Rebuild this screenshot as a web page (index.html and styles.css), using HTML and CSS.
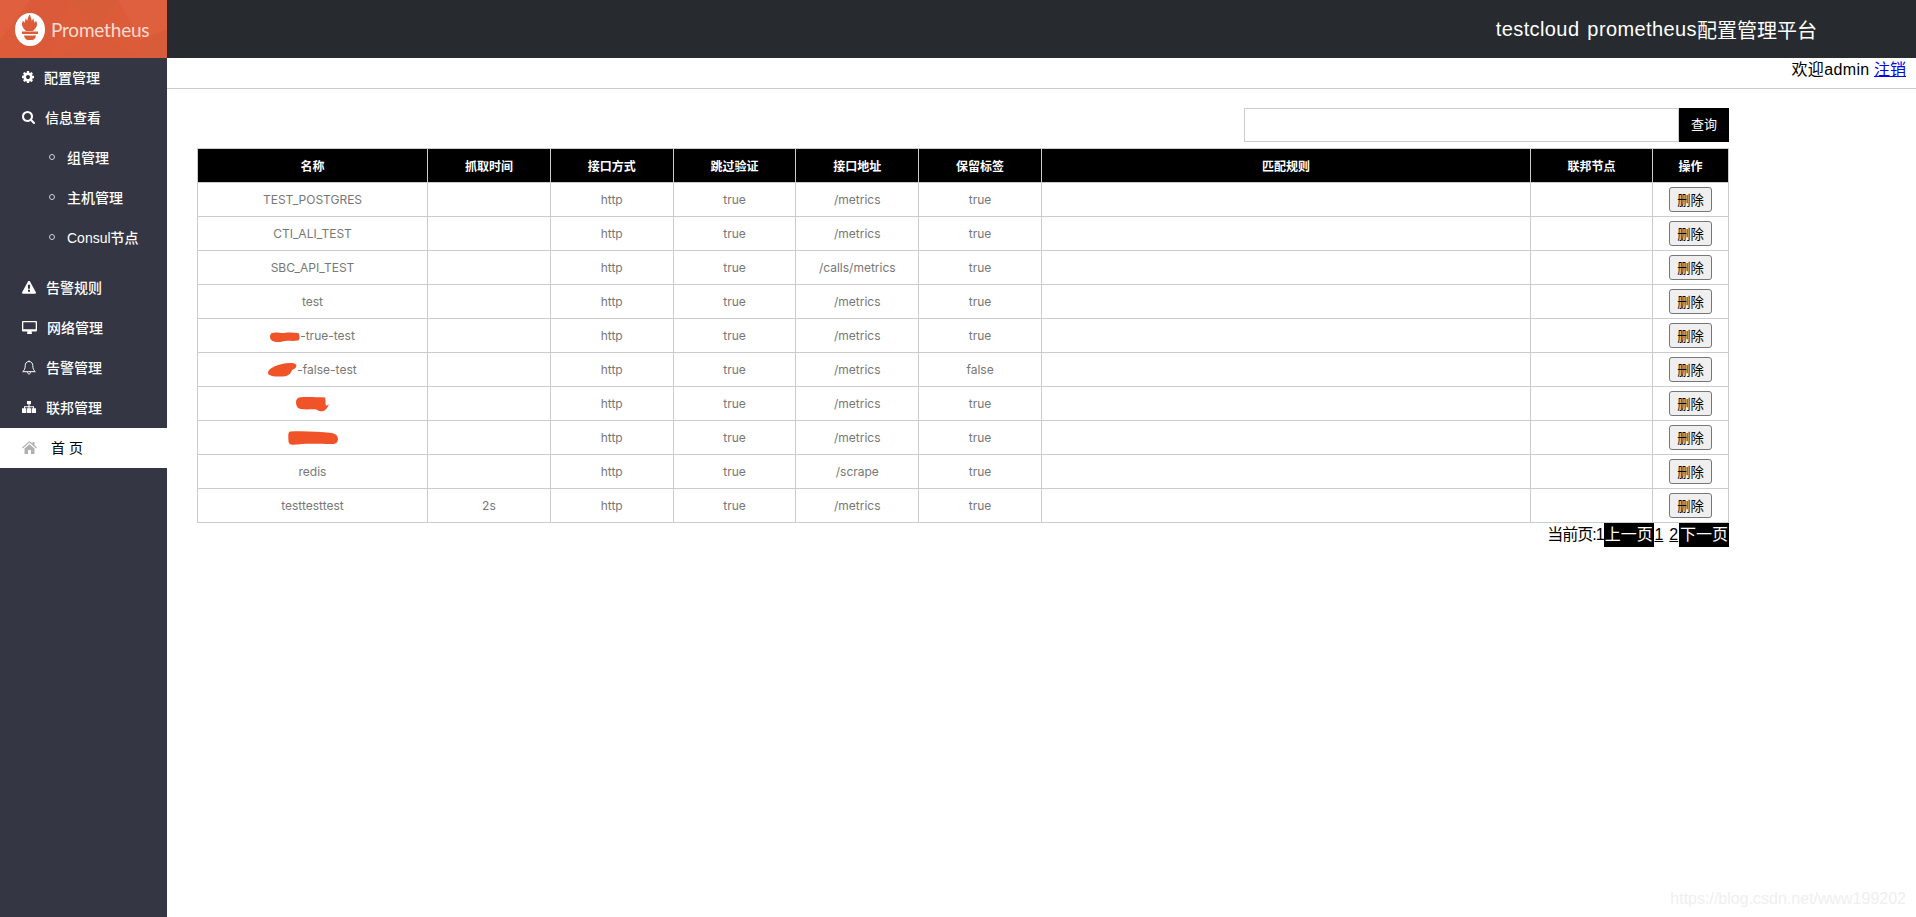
FILE: index.html
```html
<!DOCTYPE html>
<html lang="en">
<head>
    <meta charset="UTF-8">
    <meta name="viewport" content="width=device-width, initial-scale=1.0">
    <title>testcloud prometheus配置管理平台</title>
    <link rel="stylesheet" href="styles.css">
</head>
<body>
    <div class="sidebar">
        <div class="logo">
            <svg class="logo-bg" viewBox="0 0 167 58" preserveAspectRatio="none">
                <polygon points="0,0 30,0 0,40" fill="#df5f3e"/>
                <polygon points="30,0 70,0 50,58 20,58" fill="#da5a3a"/>
                <polygon points="70,0 118,0 95,30" fill="#d75c38"/>
                <polygon points="95,30 140,58 60,58" fill="#da5b39"/>
                <polygon points="118,0 167,0 167,30 140,40" fill="#df603e"/>
                <polygon points="140,40 167,30 167,58 140,58" fill="#d85c39"/>
            </svg>
            <svg class="logo-mark" viewBox="0 0 30 33" preserveAspectRatio="none">
                <ellipse cx="15" cy="16.500" rx="15" ry="16.500" fill="#fff"/>
                <path d="M15 2c.5 2 1.500 3.500 1.800 6l1.500-3c.3 2 1 3.500 1.200 5l1.500-2.500c1 2.500 1.500 4 .5 6-.6 1.500-2 3-3.500 4.500H11c-1.500-1.500-2.900-3-3.500-4.500-1-2-.5-3.500.5-6l1.500 2.500c.2-1.500.9-3 1.200-5l1.500 3c.3-2.500 1.300-4 1.800-6z" fill="#dc5c3a"/>
                <rect x="7" y="18.500" width="16" height="2.500" fill="#dc5c3a"/>
                <path d="M9 22.500h12c-.5 2.500-1.500 4-3.500 4.500h-5C10.500 26.500 9.500 25 9 22.500z" fill="#dc5c3a"/>
            </svg>
            <span class="logo-text">Prometheus</span>
        </div>
        <ul class="menu">
            <li class="menu-item">
                <svg class="icon icon-gear" viewBox="0 0 1536 1536"><path transform="translate(-128 -128)" d="M1152 896q0-106-75-181t-181-75-181 75-75 181 75 181 181 75 181-75 75-181zm512-109v222q0 12-8 23t-20 13l-185 28q-19 54-39 91 35 50 107 138 10 12 10 25t-9 23q-27 37-99 108t-94 71q-12 0-26-9l-138-108q-44 23-91 38-16 136-29 186-7 28-36 28h-222q-14 0-24.500-8.500t-11.500-21.500l-28-184q-49-16-90-37l-141 107q-10 9-25 9-14 0-25-11-126-114-165-168-7-10-7-23 0-12 8-23 15-21 51-66.500t54-70.500q-27-50-41-99l-183-27q-13-2-21-12.500t-8-23.500v-222q0-12 8-23t19-13l186-28q14-46 39-92-40-57-107-138-10-12-10-24 0-10 9-23 26-36 98.500-107.500t94.500-71.500q13 0 26 10l138 107q44-23 91-38 16-136 29-186 7-28 36-28h222q14 0 24.500 8.500t11.500 21.500l28 184q49 16 90 37l142-107q9-9 24-9 13 0 25 10 129 119 165 170 7 8 7 22 0 12-8 23-15 21-51 66.500t-54 70.500q26 50 41 98l183 28q13 2 21 12.500t8 23.500z"/></svg>
                配置管理
            </li>
            <li class="menu-item">
                <svg class="icon icon-search" viewBox="0 0 1664 1664"><path transform="translate(0 -128)" d="M1152 832q0-185-131.500-316.500t-316.500-131.500-316.500 131.500-131.500 316.500 131.500 316.500 316.500 131.500 316.500-131.500 131.500-316.500zm512 832q0 52-38 90t-90 38q-54 0-90-38l-343-342q-179 124-399 124-143 0-273.500-55.500t-225-150-150-225-55.500-273.500 55.500-273.500 150-225 225-150 273.500-55.500 273.500 55.500 225 150 150 225 55.500 273.500q0 220-124 399l343 343q37 37 37 90z"/></svg>
                信息查看
            </li>
            <li class="menu-sub"><span class="dot"></span>组管理</li>
            <li class="menu-sub"><span class="dot"></span>主机管理</li>
            <li class="menu-sub menu-sub-last"><span class="dot"></span>Consul节点</li>
            <li class="menu-item">
                <svg class="icon icon-warning" viewBox="0 0 1792 1600"><path transform="translate(0 -64)" d="M1024 1375v-190q0-14-9.500-23.500t-22.500-9.500h-192q-13 0-22.500 9.500t-9.500 23.500v190q0 14 9.500 23.500t22.500 9.500h192q13 0 22.500-9.500t9.500-23.500zm-2-374l18-459q0-12-10-19-13-11-24-11h-220q-11 0-24 11-10 7-10 21l17 457q0 10 10 16.500t24 6.500h185q14 0 23.500-6.500t10.500-16.500zm-14-934l768 1408q35 63-2 126-17 29-46.500 46t-63.500 17h-1536q-34 0-63.500-17t-46.500-46q-37-63-2-126l768-1408q17-31 47-49t65-18 65 18 47 49z"/></svg>
                告警规则
            </li>
            <li class="menu-item">
                <svg class="icon icon-desktop" viewBox="0 0 15 13"><path fill-rule="evenodd" d="M1 0h13a1 1 0 0 1 1 1v8.500a1 1 0 0 1-1 1H9.500c0 .8.500 1.200.5 1.800a.6.600 0 0 1-.6.600H5.600a.6.600 0 0 1-.6-.6c0-.6.500-1 .5-1.800H1a1 1 0 0 1-1-1V1a1 1 0 0 1 1-1zM1.300 1.200v7h12.400v-7z"/></svg>
                网络管理
            </li>
            <li class="menu-item">
                <svg class="icon icon-bell" viewBox="0 0 14 15"><path d="M7 1.500c-2.600 0-3.800 2-3.800 4.200 0 3-1 4.800-2.500 6h12.600c-1.500-1.200-2.500-3-2.500-6C10.800 3.500 9.600 1.500 7 1.500zM5.500 12c0 1.200.7 2 1.500 2s1.500-.8 1.500-2M7 .5v1" fill="none" stroke="#fff" stroke-width="1"/></svg>
                告警管理
            </li>
            <li class="menu-item">
                <svg class="icon icon-sitemap" viewBox="0 0 14 12"><path d="M5 0h4v3.300H7.500v2h4.500v2h2V12h-4.300V7.300h1.300V6.300H7.500v1H9V12H5V7.300h1.500v-1H3v1h1.300V12H0V7.300h2v-2h4.500v-2H5z"/></svg>
                联邦管理
            </li>
            <li class="menu-item menu-active">
                <svg class="icon icon-home" viewBox="0 0 15 13"><path d="M7.500 0l3 2.600V1h2v3.300L15 6.500l-.8.900-6.700-5.800-6.700 5.800-.8-.9zM2.500 7.500l5-4.300 5 4.300V13H9V9H6v4H2.500z"/></svg>
                首 页
            </li>
        </ul>
    </div>

    <div class="main">
        <div class="topbar"><span class="topbar-name">testcloud prometheus</span>配置管理平台</div>
        <div class="userline"><span class="welcome">欢迎admin</span>&nbsp;<a href="#">注销</a></div>

        <div class="content">
            <form class="search">
                <input type="text" class="search-input">
                <button type="button" class="search-btn">查询</button>
            </form>

            <table class="jobs">
                <colgroup>
                    <col class="c-name"><col class="c-std"><col class="c-std"><col class="c-std"><col class="c-std"><col class="c-std"><col class="c-rule"><col class="c-fed"><col class="c-op">
                </colgroup>
                <thead>
                    <tr><th>名称</th><th>抓取时间</th><th>接口方式</th><th>跳过验证</th><th>接口地址</th><th>保留标签</th><th>匹配规则</th><th>联邦节点</th><th>操作</th></tr>
                </thead>
                <tbody>
                    <tr><td>TEST_POSTGRES</td><td></td><td>http</td><td>true</td><td>/metrics</td><td>true</td><td></td><td></td><td><button class="del">删除</button></td></tr>
                    <tr><td>CTI_ALI_TEST</td><td></td><td>http</td><td>true</td><td>/metrics</td><td>true</td><td></td><td></td><td><button class="del">删除</button></td></tr>
                    <tr><td>SBC_API_TEST</td><td></td><td>http</td><td>true</td><td>/calls/metrics</td><td>true</td><td></td><td></td><td><button class="del">删除</button></td></tr>
                    <tr><td>test</td><td></td><td>http</td><td>true</td><td>/metrics</td><td>true</td><td></td><td></td><td><button class="del">删除</button></td></tr>
                    <tr><td><svg class="blob blob-a" viewBox="0 0 30 10"><path d="M2 1c5-1.500 8 .5 12 0 5-.8 10-.5 14 0 2 1 2 7 0 7.500-5 .8-9 0-13 .5-3 .5-4 1-7 1C3 10 0 8 0 5c0-2 .8-3.500 2-4z"/></svg>-true-test</td><td></td><td>http</td><td>true</td><td>/metrics</td><td>true</td><td></td><td></td><td><button class="del">删除</button></td></tr>
                    <tr><td><svg class="blob blob-b" viewBox="0 0 29 14"><path d="M1 7c3-3 8-5 13-6 5-1.200 12-1.500 14 .5 1.500 2-1 4.500-4 5.500-1 3-3 6-9 6.500C8 14 0 13 0 10c0-1 .4-2 1-3z"/></svg>-false-test</td><td></td><td>http</td><td>true</td><td>/metrics</td><td>false</td><td></td><td></td><td><button class="del">删除</button></td></tr>
                    <tr><td><svg class="blob blob-c" viewBox="0 0 33 15"><path d="M3 .5C10-.3 20 .3 29 .5c1 3 0 6 1 8 1 0 2-.5 3-1.500-1 3-3 6-5.500 7-3 .8-5 0-7-1.500-5-.5-10 .5-16-.5C1 11 0 8 0 5 0 3 1 1 3 .5z"/></svg></td><td></td><td>http</td><td>true</td><td>/metrics</td><td>true</td><td></td><td></td><td><button class="del">删除</button></td></tr>
                    <tr><td><svg class="blob blob-d" viewBox="0 0 50 14"><path d="M2 .5C15-.3 30 .5 44 2c4 1 6 3 6 6 0 3-2 5-6 5-10 0-22-.5-30 0-4 .3-8 1-11 .5C0 13 .5 9 .3 6 .2 3 .5 1 2 .5z"/></svg></td><td></td><td>http</td><td>true</td><td>/metrics</td><td>true</td><td></td><td></td><td><button class="del">删除</button></td></tr>
                    <tr><td>redis</td><td></td><td>http</td><td>true</td><td>/scrape</td><td>true</td><td></td><td></td><td><button class="del">删除</button></td></tr>
                    <tr><td>testtesttest</td><td>2s</td><td>http</td><td>true</td><td>/metrics</td><td>true</td><td></td><td></td><td><button class="del">删除</button></td></tr>
                </tbody>
            </table>

            <div class="pager">
                <span class="pager-now">当前页:1</span><span class="pager-btn">上一页</span><a href="#">1</a> <a href="#">2</a><span class="pager-btn">下一页</span>
            </div>
        </div>
    </div>

    <div class="watermark">https://blog.csdn.net/www199202</div>
</body>
</html>
```

FILE: styles.css
```css
* {
    box-sizing: border-box;
}
html, body {
    height: 100%;
}
body {
    margin: 0;
    display: flex;
    overflow: hidden;
    background-color: #fff;
    color: #000;
    font-family: "Liberation Sans", "Noto Sans CJK SC", sans-serif;
    font-size: 16px;
}

/* sidebar */
.sidebar {
    width: 167px;
    flex-shrink: 0;
    background-color: #343643;
}
.logo {
    position: relative;
    height: 58px;
    display: flex;
    align-items: center;
    padding-left: 15px;
    background-color: #dc5c3a;
}
.logo-bg {
    position: absolute;
    left: 0;
    top: 0;
    width: 100%;
    height: 100%;
}
.logo-mark {
    position: relative;
    width: 30px;
    height: 33px;
    margin-top: 1px;
}
.logo-text {
    position: relative;
    margin-left: 6px;
    font-family: Lato, sans-serif;
    font-size: 19px;
    letter-spacing: -.2px;
    color: #f6dcd2;
}
.menu {
    list-style: none;
    margin: 0;
    padding: 0;
}
.menu-item, .menu-sub {
    height: 40px;
    display: flex;
    align-items: center;
    padding-bottom: 2px;
    color: #fff;
    font-size: 14px;
    font-weight: 500;
}
.menu-item {
    padding-left: 22px;
}
.menu-sub {
    padding-left: 49px;
}
.menu-sub-last {
    margin-bottom: 10px;
}
.dot {
    width: 6px;
    height: 6px;
    margin-right: 12px;
    border: 1px solid #cfd0d6;
    border-radius: 50%;
}
.icon {
    flex-shrink: 0;
    margin-right: 10px;
    fill: #fff;
}
.icon-gear { width: 12px; height: 12px; }
.icon-search { width: 13px; height: 13px; }
.icon-warning { width: 14px; height: 13px; }
.icon-desktop { width: 15px; height: 13px; }
.icon-bell { width: 14px; height: 15px; fill: none; }
.icon-sitemap { width: 14px; height: 12px; }
.icon-home { width: 15px; height: 13px; margin-right: 14px; fill: #b0b0b0; }
.menu-active {
    background-color: #fff;
    color: #000;
    font-weight: normal;
}

/* top area */
.main {
    flex: 1;
    min-width: 0;
}
.topbar {
    height: 58px;
    display: flex;
    align-items: center;
    justify-content: flex-end;
    padding-right: 99px;
    background-color: #272b30;
    color: #fff;
    font-size: 20px;
}
.topbar-name {
    letter-spacing: .4px;
    word-spacing: 2px;
}
.userline {
    height: 31px;
    padding: 1px 10px 0 0;
    text-align: right;
    line-height: 22px;
    border-bottom: 1px solid #ccc;
}
.welcome {
    letter-spacing: .35px;
}
.userline a {
    color: #00e;
}

/* table */
.content {
    width: 1532px;
    margin-left: 30px;
}
.search {
    display: flex;
    justify-content: flex-end;
    margin: 19px 0 6px;
}
.search-input {
    width: 435px;
    height: 34px;
    border: 1px solid #ccc;
    outline: none;
}
.search-btn {
    width: 50px;
    height: 34px;
    padding: 0 0 3px;
    border: none;
    background-color: #000;
    color: #fff;
    font-family: inherit;
    font-size: 13px;
}
.jobs {
    width: 1531px;
    table-layout: fixed;
    border-collapse: collapse;
    font-size: 12px;
}
.c-name { width: 230px; }
.c-std { width: 122.8px; }
.c-rule { width: 489px; }
.c-fed { width: 122px; }
.c-op { width: 76px; }
.jobs th, .jobs td {
    height: 34px;
    padding: 0;
    border: 1px solid #ccc;
    text-align: center;
}
.jobs th {
    background-color: #000;
    color: #fff;
}
.jobs td {
    color: #777;
    font-family: Inter, "Liberation Sans", "Noto Sans CJK SC", sans-serif;
}
.del {
    width: 43px;
    height: 25px;
    padding: 0;
    border: 1px solid #767676;
    border-radius: 3px;
    background-color: #efefef;
    color: #000;
    font-family: "Liberation Sans", "Noto Sans CJK SC", sans-serif;
    font-size: 13.33px;
    vertical-align: middle;
}
.blob {
    display: inline-block;
    vertical-align: middle;
    fill: #ef5327;
}
.blob-a { width: 30px; height: 10px; }
.blob-b { width: 29px; height: 14px; }
.blob-c { width: 33px; height: 15px; }
.blob-d { width: 50px; height: 14px; }
.pager {
    text-align: right;
    line-height: 24px;
}
.pager-now {
    letter-spacing: -1px;
}
.pager a {
    margin: 0 .75px;
    color: #000;
}
.pager-btn {
    display: inline-block;
    padding: 0 1px;
    background-color: #000;
    color: #fff;
    vertical-align: top;
}

.watermark {
    position: absolute;
    right: 10px;
    bottom: 9px;
    color: #efefef;
    font-size: 16px;
}
```
